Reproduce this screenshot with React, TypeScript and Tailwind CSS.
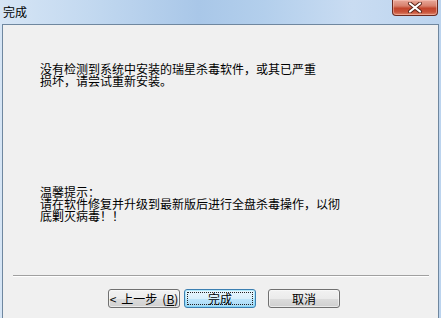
const cjk = "font-['SimSun','Noto_Sans_CJK_SC',sans-serif]"

function CloseButton() {
  return (
    <div className="relative mr-[3px] h-[16px] w-[46px] overflow-hidden rounded-b-[4px] border border-t-0 border-[#6b2a20] bg-[linear-gradient(180deg,#e8a899_0%,#d7806c_40%,#c2452c_55%,#c9533a_80%,#e08a6e_100%)] shadow-[inset_0_0_0_1px_rgba(255,210,200,0.45)]">
      <svg
        className="absolute left-1/2 top-[2px] -translate-x-1/2"
        width="16"
        height="11"
        viewBox="0 0 16 11"
      >
        <path
          d="M3 1.5 L13 9.5 M13 1.5 L3 9.5"
          stroke="#5a2418"
          strokeWidth="4"
          strokeLinecap="round"
          fill="none"
        />
        <path
          d="M3 1.5 L13 9.5 M13 1.5 L3 9.5"
          stroke="#ffffff"
          strokeWidth="2.2"
          strokeLinecap="round"
          fill="none"
        />
      </svg>
    </div>
  )
}

function Button({ children, primary }: { children: React.ReactNode; primary?: boolean }) {
  if (primary) {
    return (
      <button className="flex h-[19px] w-[72px] items-center justify-center rounded-[3px] border border-[#3c7fb1] bg-[linear-gradient(180deg,#eaf6fd_0%,#d9f0fc_50%,#bee6fd_51%,#a7d9f5_100%)] p-[2px] shadow-[inset_0_0_0_1px_#48d5fd55]">
        <span className="flex h-full w-full items-center justify-center border border-dotted border-[#222] text-[12px] leading-none text-black">
          {children}
        </span>
      </button>
    )
  }
  return (
    <button className="flex h-[19px] w-[72px] items-center justify-center rounded-[3px] border border-[#707070] bg-[linear-gradient(180deg,#f2f2f2_0%,#ebebeb_50%,#dddddd_51%,#cfcfcf_100%)] text-[12px] leading-none text-black shadow-[inset_0_0_0_1px_#fcfcfc99]">
      {children}
    </button>
  )
}

export default function App() {
  return (
    <div
      className={`flex h-[318px] w-[441px] flex-col overflow-hidden bg-[linear-gradient(90deg,#d6e5f5_0%,#c3d9f0_20%,#a9c7e8_45%,#b3cfec_60%,#c9dcf2_80%,#bcd4ee_100%)] ${cjk}`}
    >
      <div className="flex h-[24px] items-start justify-between">
        <span className="pl-[3px] pt-[6px] text-[12px] leading-[12px] text-black">完成</span>
        <CloseButton />
      </div>

      <div className="ml-[2px] mr-[2px] flex flex-1 flex-col border-l border-r border-t border-[#6f879f] bg-[#f0f0f0]">
        <p className="ml-[37px] mt-[38px] text-[12px] leading-[12px] text-black">
          没有检测到系统中安装的瑞星杀毒软件，或其已严重
          <br />
          损坏，请尝试重新安装。
        </p>

        <p className="ml-[37px] mt-[99px] text-[12px] leading-[12px] text-black">
          温馨提示：
          <br />
          请在软件修复并升级到最新版后进行全盘杀毒操作，以彻
          <br />
          底剿灭病毒！！
        </p>

        <div className="ml-[10px] mr-[9px] mt-[53px] border-b border-t border-b-white border-t-[#a0a0a0]" />

        <div className="ml-[105px] mt-[12px] flex">
          <Button>
            <span className="flex items-center gap-[5px]">
              <span>&lt;</span>
              <span>上一步</span>
              <span>
                (<span className="underline">B</span>)
              </span>
            </span>
          </Button>
          <div className="ml-[4px]">
            <Button primary>完成</Button>
          </div>
          <div className="ml-[12px]">
            <Button>取消</Button>
          </div>
        </div>
      </div>
    </div>
  )
}
